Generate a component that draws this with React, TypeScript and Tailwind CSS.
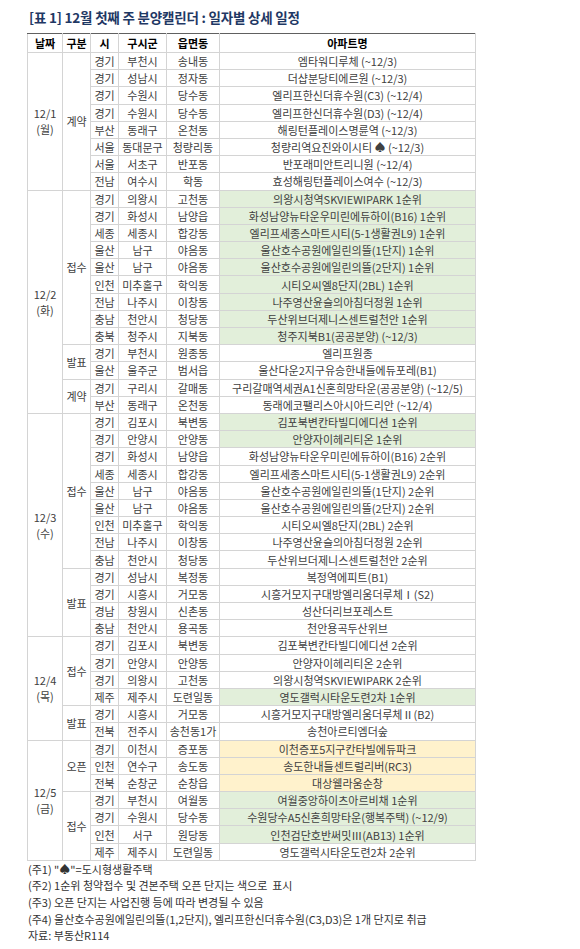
import React from "react";

type Row = {
  si: string;
  gu: string;
  dong: string;
  name: string;
  fill?: "green" | "yellow";
};

type Group = { kind: string; rows: Row[] };
type Day = { date: string; wd: string; groups: Group[] };

const days: Day[] = [
  {
    date: "12/1",
    wd: "(월)",
    groups: [
      {
        kind: "계약",
        rows: [
          { si: "경기", gu: "부천시", dong: "송내동", name: "엠타워디루체 (~12/3)" },
          { si: "경기", gu: "성남시", dong: "정자동", name: "더샵분당티에르원 (~12/3)" },
          { si: "경기", gu: "수원시", dong: "당수동", name: "엘리프한신더휴수원(C3) (~12/4)" },
          { si: "경기", gu: "수원시", dong: "당수동", name: "엘리프한신더휴수원(D3) (~12/4)" },
          { si: "부산", gu: "동래구", dong: "온천동", name: "해링턴플레이스명륜역 (~12/3)" },
          { si: "서울", gu: "동대문구", dong: "청량리동", name: "청량리역요진와이시티 ♠ (~12/3)" },
          { si: "서울", gu: "서초구", dong: "반포동", name: "반포래미안트리니원 (~12/4)" },
          { si: "전남", gu: "여수시", dong: "학동", name: "효성해링턴플레이스여수 (~12/3)" },
        ],
      },
    ],
  },
  {
    date: "12/2",
    wd: "(화)",
    groups: [
      {
        kind: "접수",
        rows: [
          { si: "경기", gu: "의왕시", dong: "고천동", name: "의왕시청역SKVIEWIPARK 1순위", fill: "green" },
          { si: "경기", gu: "화성시", dong: "남양읍", name: "화성남양뉴타운우미린에듀하이(B16) 1순위", fill: "green" },
          { si: "세종", gu: "세종시", dong: "합강동", name: "엘리프세종스마트시티(5-1생활권L9) 1순위", fill: "green" },
          { si: "울산", gu: "남구", dong: "야음동", name: "울산호수공원에일린의뜰(1단지) 1순위", fill: "green" },
          { si: "울산", gu: "남구", dong: "야음동", name: "울산호수공원에일린의뜰(2단지) 1순위", fill: "green" },
          { si: "인천", gu: "미추홀구", dong: "학익동", name: "시티오씨엘8단지(2BL) 1순위", fill: "green" },
          { si: "전남", gu: "나주시", dong: "이창동", name: "나주영산윤슬의아침더정원 1순위", fill: "green" },
          { si: "충남", gu: "천안시", dong: "청당동", name: "두산위브더제니스센트럴천안 1순위", fill: "green" },
          { si: "충북", gu: "청주시", dong: "지북동", name: "청주지북B1(공공분양) (~12/3)", fill: "green" },
        ],
      },
      {
        kind: "발표",
        rows: [
          { si: "경기", gu: "부천시", dong: "원종동", name: "엘리프원종" },
          { si: "울산", gu: "울주군", dong: "범서읍", name: "울산다운2지구유승한내들에듀포레(B1)" },
        ],
      },
      {
        kind: "계약",
        rows: [
          { si: "경기", gu: "구리시", dong: "갈매동", name: "구리갈매역세권A1신혼희망타운(공공분양) (~12/5)" },
          { si: "부산", gu: "동래구", dong: "온천동", name: "동래에코팰리스아시아드리안 (~12/4)" },
        ],
      },
    ],
  },
  {
    date: "12/3",
    wd: "(수)",
    groups: [
      {
        kind: "접수",
        rows: [
          { si: "경기", gu: "김포시", dong: "북변동", name: "김포북변칸타빌디에디션 1순위", fill: "green" },
          { si: "경기", gu: "안양시", dong: "안양동", name: "안양자이헤리티온 1순위", fill: "green" },
          { si: "경기", gu: "화성시", dong: "남양읍", name: "화성남양뉴타운우미린에듀하이(B16) 2순위" },
          { si: "세종", gu: "세종시", dong: "합강동", name: "엘리프세종스마트시티(5-1생활권L9) 2순위" },
          { si: "울산", gu: "남구", dong: "야음동", name: "울산호수공원에일린의뜰(1단지) 2순위" },
          { si: "울산", gu: "남구", dong: "야음동", name: "울산호수공원에일린의뜰(2단지) 2순위" },
          { si: "인천", gu: "미추홀구", dong: "학익동", name: "시티오씨엘8단지(2BL) 2순위" },
          { si: "전남", gu: "나주시", dong: "이창동", name: "나주영산윤슬의아침더정원 2순위" },
          { si: "충남", gu: "천안시", dong: "청당동", name: "두산위브더제니스센트럴천안 2순위" },
        ],
      },
      {
        kind: "발표",
        rows: [
          { si: "경기", gu: "성남시", dong: "복정동", name: "복정역에피트(B1)" },
          { si: "경기", gu: "시흥시", dong: "거모동", name: "시흥거모지구대방엘리움더루체Ⅰ(S2)" },
          { si: "경남", gu: "창원시", dong: "신촌동", name: "성산더리브포레스트" },
          { si: "충남", gu: "천안시", dong: "용곡동", name: "천안용곡두산위브" },
        ],
      },
    ],
  },
  {
    date: "12/4",
    wd: "(목)",
    groups: [
      {
        kind: "접수",
        rows: [
          { si: "경기", gu: "김포시", dong: "북변동", name: "김포북변칸타빌디에디션 2순위" },
          { si: "경기", gu: "안양시", dong: "안양동", name: "안양자이헤리티온 2순위" },
          { si: "경기", gu: "의왕시", dong: "고천동", name: "의왕시청역SKVIEWIPARK 2순위" },
          { si: "제주", gu: "제주시", dong: "도련일동", name: "영도갤럭시타운도련2차 1순위", fill: "green" },
        ],
      },
      {
        kind: "발표",
        rows: [
          { si: "경기", gu: "시흥시", dong: "거모동", name: "시흥거모지구대방엘리움더루체Ⅱ(B2)" },
          { si: "전북", gu: "전주시", dong: "송천동1가", name: "송천아르티엠더숲" },
        ],
      },
    ],
  },
  {
    date: "12/5",
    wd: "(금)",
    groups: [
      {
        kind: "오픈",
        rows: [
          { si: "경기", gu: "이천시", dong: "증포동", name: "이천증포5지구칸타빌에듀파크", fill: "yellow" },
          { si: "인천", gu: "연수구", dong: "송도동", name: "송도한내들센트럴리버(RC3)", fill: "yellow" },
          { si: "전북", gu: "순창군", dong: "순창읍", name: "대상웰라움순창", fill: "yellow" },
        ],
      },
      {
        kind: "접수",
        rows: [
          { si: "경기", gu: "부천시", dong: "여월동", name: "여월중앙하이츠아르비채 1순위", fill: "green" },
          { si: "경기", gu: "수원시", dong: "당수동", name: "수원당수A5신혼희망타운(행복주택) (~12/9)", fill: "green" },
          { si: "인천", gu: "서구", dong: "원당동", name: "인천검단호반써밋Ⅲ(AB13) 1순위", fill: "green" },
          { si: "제주", gu: "제주시", dong: "도련일동", name: "영도갤럭시타운도련2차 2순위" },
        ],
      },
    ],
  },
];

const notes = [
  '(주1) "♠"=도시형생활주택',
  "(주2) 1순위 청약접수 및 견본주택 오픈 단지는 색으로  표시",
  "(주3) 오픈 단지는 사업진행 등에 따라 변경될 수 있음",
  "(주4) 울산호수공원에일린의뜰(1,2단지), 엘리프한신더휴수원(C3,D3)은 1개 단지로 취급",
  "자료: 부동산R114",
];

const cell = "border border-[#d4d4d4] p-0 text-center align-middle";

export default function App() {
  const body: React.ReactNode[] = [];
  days.forEach((day) => {
    const dayRows = day.groups.reduce((n, g) => n + g.rows.length, 0);
    day.groups.forEach((g, gi) => {
      g.rows.forEach((r, ri) => {
        const bg =
          r.fill === "green" ? "bg-[#e2efda]" : r.fill === "yellow" ? "bg-[#fff2cc]" : "";
        body.push(
          <tr key={`${day.date}-${gi}-${ri}`} className="h-[17.2px]">
            {gi === 0 && ri === 0 && (
              <td rowSpan={dayRows} className={cell}>
                <div>{day.date}</div>
                <div>{day.wd}</div>
              </td>
            )}
            {ri === 0 && (
              <td rowSpan={g.rows.length} className={cell}>
                {g.kind}
              </td>
            )}
            <td className={cell}>{r.si}</td>
            <td className={cell}>{r.gu}</td>
            <td className={cell}>{r.dong}</td>
            <td className={`${cell} ${bg} whitespace-nowrap`}>{r.name}</td>
          </tr>
        );
      });
    });
  });

  return (
    <div
      className="w-[580px] min-h-[949px] bg-white pl-[27px] pt-[8px]"
      style={{ fontFamily: '"Noto Sans CJK KR", "Noto Sans", sans-serif' }}
    >
      <h1 className="pl-[2px] text-[13.5px] font-bold leading-[18px] text-[#1f3864] tracking-[-0.2px]">
        [표 1] 12월 첫째 주 분양캘린더 : 일자별 상세 일정
      </h1>

      <table className="mt-[7px] w-[449px] table-fixed border-collapse text-[11px] leading-[16px] text-[#404040]">
        <colgroup>
          <col className="w-[35px]" />
          <col className="w-[28px]" />
          <col className="w-[28px]" />
          <col className="w-[48px]" />
          <col className="w-[53px]" />
          <col />
        </colgroup>
        <thead>
          <tr className="h-[19px] border-t border-t-[#606060]">
            {["날짜", "구분", "시", "구시군", "읍면동", "아파트명"].map((h) => (
              <th
                key={h}
                className="border border-[#d4d4d4] border-t-[#606060] p-0 text-center font-bold text-black"
              >
                {h}
              </th>
            ))}
          </tr>
        </thead>
        <tbody>{body}</tbody>
      </table>

      <div className="pl-[1px] text-[11px] leading-[16.6px] text-[#333]">
        {notes.map((n) => (
          <div key={n} className="whitespace-pre">
            {n}
          </div>
        ))}
      </div>
    </div>
  );
}
